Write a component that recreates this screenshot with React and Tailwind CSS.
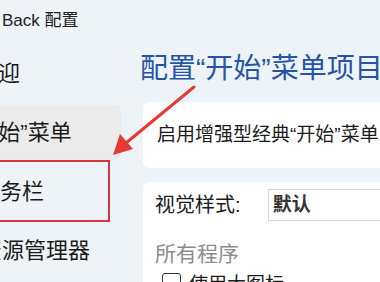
const Q = ({ children }) => (
  <span className="[font-family:'Liberation_Sans',Arial,sans-serif]">{children}</span>
)

const navItems = [
  { key: 'welcome', label: <>欢迎</>, active: false, shift: '-ml-[24px]' },
  { key: 'start', label: <><Q>“</Q>开始<Q>”</Q>菜单</>, active: true, shift: '-ml-[31px]' },
  { key: 'taskbar', label: <>任务栏</>, active: false, shift: '-ml-[22px]' },
  { key: 'explorer', label: <>资源管理器</>, active: false, shift: '-ml-[20px]' },
]

function Arrow() {
  return (
    <svg className="absolute left-0 top-0 pointer-events-none" width="380" height="282">
      <line x1="194" y1="87" x2="126" y2="143" stroke="#e53a33" strokeWidth="3" strokeLinecap="round" />
      <polygon points="113,155 120,134 133,149" fill="#e53a33" />
    </svg>
  )
}

export default function App() {
  return (
    <div className="relative w-[380px] h-[282px] overflow-hidden bg-[#eef3f7] text-[#1b1b1b] [font-family:'Liberation_Sans','Noto_Sans_CJK_SC',sans-serif]">
      <div className="flex h-full">
        {/* sidebar */}
        <div className="w-[143px] shrink-0 flex flex-col">
          <div className="h-[41px] pl-[2px] flex items-center text-[17px] text-[#222]">Back 配置</div>
          <div className="flex flex-col gap-[4px] pt-[5px]">
            {navItems.map(item => (
              <div
                key={item.key}
                className={`w-[121px] h-[55px] shrink-0 flex items-center rounded-r-[6px] whitespace-nowrap text-[22px] ${item.active ? 'bg-[#ebebeb]' : ''}`}
              >
                <span className={item.shift}>{item.label}</span>
              </div>
            ))}
          </div>
        </div>

        {/* content */}
        <div className="flex-1 flex flex-col pt-[52px] -ml-[3px]">
          <h1 className="h-[50px] shrink-0 whitespace-nowrap text-[28px] leading-[34px] text-[#2553a6]">
            配置<Q>“</Q>开始<Q>”</Q>菜单项目
          </h1>
          <div className="ml-[3px] w-[260px] h-[66px] shrink-0 rounded-[6px] bg-white flex items-center pl-[14px] whitespace-nowrap text-[19px]">
            启用增强型经典<Q>“</Q>开始<Q>”</Q>菜单
          </div>
          <div className="ml-[3px] mt-[14px] w-[260px] h-[160px] shrink-0 rounded-t-[6px] bg-white pl-[12px] pt-[7px] whitespace-nowrap">
            <div className="flex items-center h-[32px]">
              <span className="w-[117px] text-[20px] leading-[32px]">视觉样式:</span>
              <div className="h-[32px] w-[140px] border border-[#d6d6d6] bg-white flex items-center pl-[4px] text-[19px] font-semibold text-[#333]">默认</div>
            </div>
            <div className="mt-[19px] h-[28px] text-[21px] leading-[28px] text-[#8c8c8c]">所有程序</div>
            <div className="flex items-start gap-[8px] mt-[5px] pl-[7px]">
              <span className="w-[19px] h-[19px] border-[1.5px] border-[#333] rounded-[3px] shrink-0" />
              <span className="text-[19px] leading-[24px]">使用大图标</span>
            </div>
          </div>
        </div>
      </div>

      {/* annotations */}
      <div className="absolute left-[-3px] top-[160px] w-[113px] h-[62px] border-2 border-[#d8383a]" />
      <Arrow />
    </div>
  )
}
